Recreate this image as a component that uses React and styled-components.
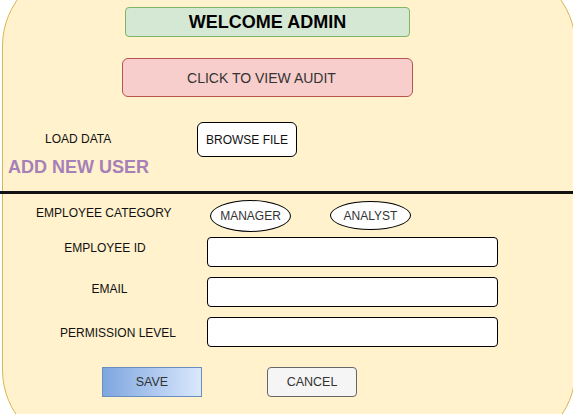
import React from "react";
import styled, { createGlobalStyle } from "styled-components";

const Global = createGlobalStyle`
  html, body { margin: 0; padding: 0; overflow: hidden; background: #ffffff; }
  body { width: 573px; height: 414px; font-family: "Liberation Sans", Arial, sans-serif; }
  * { box-sizing: border-box; }
`;

const Card = styled.div`
  margin: -34px 0 0 2px;
  width: 574px;
  height: 484px;
  border: 1px solid #d6b656;
  border-radius: 80px;
  background: #fff2cc;
  padding-top: 33px;
  display: flex;
  flex-direction: column;
  align-items: flex-start;
`;

const Banner = styled.div`
  margin-top: ${(p) => p.$top}px;
  margin-left: ${(p) => p.$left}px;
  width: ${(p) => p.$w}px;
  height: ${(p) => p.$h}px;
  padding-right: ${(p) => p.$pr || 0}px;
  display: flex;
  align-items: center;
  justify-content: center;
  border-radius: ${(p) => p.$r}px;
  background: ${(p) => p.$bg};
  border: 1px solid ${(p) => p.$border};
  color: ${(p) => p.$color};
  font-size: ${(p) => p.$size}px;
  font-weight: ${(p) => (p.$bold ? 700 : 400)};
`;

const LoadRow = styled.div`
  margin-top: 25px;
  padding-left: 42px;
  display: flex;
  align-items: flex-start;
`;

const Label = styled.div`
  font-size: 12px;
  line-height: 14px;
  color: #111;
  white-space: nowrap;
`;

const LoadLabel = styled(Label)`
  width: 152px;
  margin-top: 10px;
`;

const BrowseButton = styled.div`
  width: 100px;
  height: 35px;
  background: #fff;
  border: 1px solid #000;
  border-radius: 6px;
  display: flex;
  align-items: center;
  justify-content: center;
  font-size: 12px;
  color: #111;
`;

const SectionTitle = styled.div`
  margin-left: 5px;
  font-size: 18px;
  line-height: 20px;
  font-weight: 700;
  color: #a680b8;
`;

const Divider = styled.div`
  margin-top: 14px;
  margin-left: -3px;
  width: 580px;
  height: 3px;
  background: #111;
`;

const CategoryRow = styled.div`
  margin-top: 6px;
  padding-left: 33px;
  display: flex;
  align-items: flex-start;
`;

const CategoryLabel = styled(Label)`
  width: 174px;
  margin-top: 6px;
`;

const Pill = styled.div`
  width: 81px;
  height: ${(p) => p.$h}px;
  margin-top: ${(p) => p.$top}px;
  margin-left: ${(p) => p.$left}px;
  border: 1px solid #000;
  border-radius: 50%;
  background: #fff;
  display: flex;
  align-items: center;
  justify-content: center;
  font-size: 12px;
  color: #333;
`;

const Form = styled.div`
  margin-top: 5px;
  display: flex;
  flex-direction: column;
  gap: 10px;
`;

const FieldRow = styled.div`
  display: grid;
  grid-template-columns: 204px 291px;
  align-items: start;
`;

const FieldLabel = styled(Label)`
  text-align: center;
  padding-left: ${(p) => p.$shift}px;
  margin-top: ${(p) => p.$dy}px;
`;

const Input = styled.div`
  height: 30px;
  background: #fff;
  border: 1px solid #000;
  border-radius: 4px;
`;

const Actions = styled.div`
  margin-top: 20px;
  padding-left: 99px;
  display: flex;
  gap: 65px;
`;

const Button = styled.div`
  width: ${(p) => p.$w}px;
  height: 30px;
  display: flex;
  align-items: center;
  justify-content: center;
  font-size: 12.5px;
  color: #333;
  border: 1px solid ${(p) => p.$border};
  border-radius: ${(p) => p.$r}px;
  background: ${(p) => p.$bg};
`;

const fields = [
  { label: "EMPLOYEE ID", shift: 0, dy: 4 },
  { label: "EMAIL", shift: 9, dy: 5 },
  { label: "PERMISSION LEVEL", shift: 26, dy: 9 },
];

export default function App() {
  return (
    <>
      <Global />
      <Card>
        <Banner
          $top={7}
          $left={122}
          $w={285}
          $h={30}
          $r={4}
          $bg="#d5e8d4"
          $border="#82b366"
          $color="#000"
          $size={18}
          $bold
        >
          WELCOME ADMIN
        </Banner>
        <Banner
          $top={21}
          $left={119}
          $w={291}
          $h={39}
          $r={6}
          $pr={12}
          $bg="#f8cecc"
          $border="#b85450"
          $color="#333"
          $size={14}
        >
          CLICK TO VIEW AUDIT
        </Banner>
        <LoadRow>
          <LoadLabel>LOAD DATA</LoadLabel>
          <BrowseButton>BROWSE FILE</BrowseButton>
        </LoadRow>
        <SectionTitle>ADD NEW USER</SectionTitle>
        <Divider />
        <CategoryRow>
          <CategoryLabel>EMPLOYEE CATEGORY</CategoryLabel>
          <Pill $h={32} $top={0} $left={0}>MANAGER</Pill>
          <Pill $h={29} $top={1} $left={39}>ANALYST</Pill>
        </CategoryRow>
        <Form>
          {fields.map((f) => (
            <FieldRow key={f.label}>
              <FieldLabel $shift={f.shift} $dy={f.dy}>{f.label}</FieldLabel>
              <Input />
            </FieldRow>
          ))}
        </Form>
        <Actions>
          <Button
            $w={100}
            $r={0}
            $border="#6c8ebf"
            $bg="linear-gradient(to right, #7ea6e0, #dae8fc)"
          >
            SAVE
          </Button>
          <Button $w={90} $r={4} $border="#666666" $bg="#f5f5f5">
            CANCEL
          </Button>
        </Actions>
      </Card>
    </>
  );
}
